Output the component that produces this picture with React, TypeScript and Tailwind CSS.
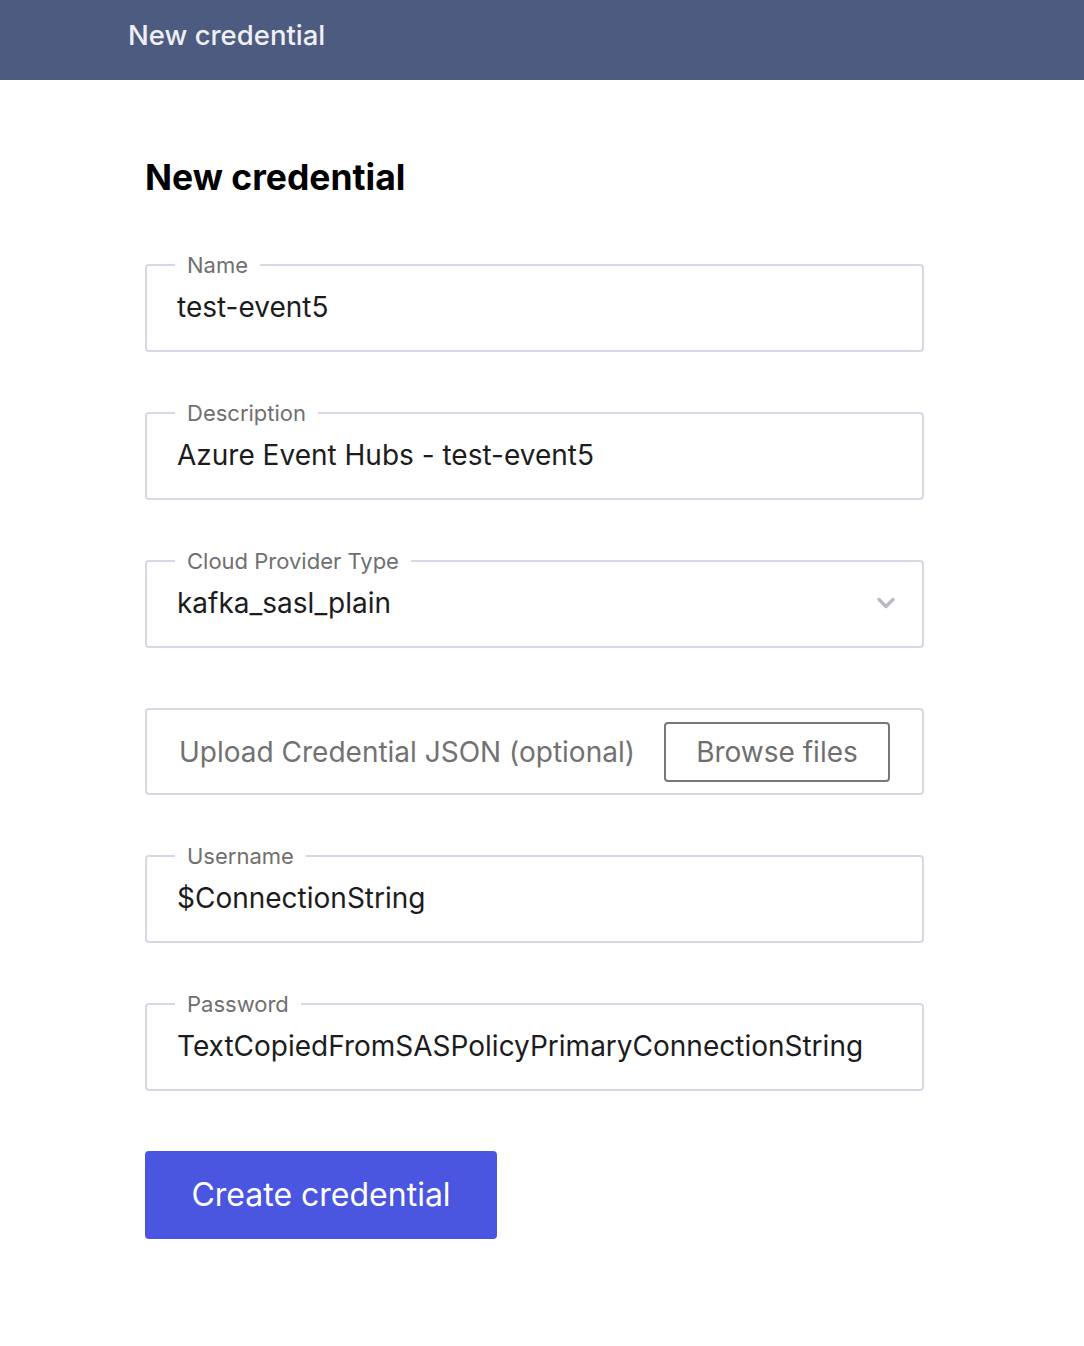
import { ChevronDown } from "lucide-react";

const font = { fontFamily: "Inter, 'Noto Sans', sans-serif" };

function Field({ label, value, select }: { label: string; value: string; select?: boolean }) {
  return (
    <fieldset className="h-[99px] rounded border-2 border-[#d6d8e3] px-[32px] pt-[12px]">
      <legend className="-ml-[4px] px-[12px] text-[22px] leading-[24px] text-[#707070]">{label}</legend>
      <div className="flex items-center justify-between">
        <span className="-ml-[2px] text-[28px] leading-[36px] text-[#1c1c1e]">{value}</span>
        {select && <ChevronDown className="-mr-[10px] h-7 w-7 text-[#b9bac4]" strokeWidth={3} />}
      </div>
    </fieldset>
  );
}

export default function App() {
  return (
    <div className="min-h-screen bg-white" style={font}>
      <header className="flex h-[80px] items-center bg-[#4e5b80] px-[128px] pb-[8px]">
        <span className="text-[27.5px] font-medium text-[#eef0f6]">New credential</span>
      </header>

      <main className="px-[145px] pt-[76px]">
        <h1 className="text-[35.5px] font-bold leading-[44px] text-black">New credential</h1>

        <form className="mt-[53px] flex w-[779px] flex-col gap-[49px]">
          <Field label="Name" value="test-event5" />
          <Field label="Description" value="Azure Event Hubs - test-event5" />
          <Field label="Cloud Provider Type" value="kafka_sasl_plain" select />

          <div className="mt-[11px] flex h-[87px] items-center justify-between rounded border-2 border-[#d6d8e3] px-[32px]">
            <span className="text-[28px] text-[#727272]">Upload Credential JSON (optional)</span>
            <button
              type="button"
              className="flex h-[60px] w-[226px] items-center justify-center rounded border-2 border-[#777] text-[28px] text-[#6f6f6f]"
            >
              Browse files
            </button>
          </div>

          <Field label="Username" value="$ConnectionString" />
          <Field label="Password" value="TextCopiedFromSASPolicyPrimaryConnectionString" />

          <div className="mt-[11px]">
            <button
              type="submit"
              className="h-[88px] w-[352px] rounded bg-[#4a55e0] text-[32px] text-white"
            >
              Create credential
            </button>
          </div>
        </form>
      </main>
    </div>
  );
}
